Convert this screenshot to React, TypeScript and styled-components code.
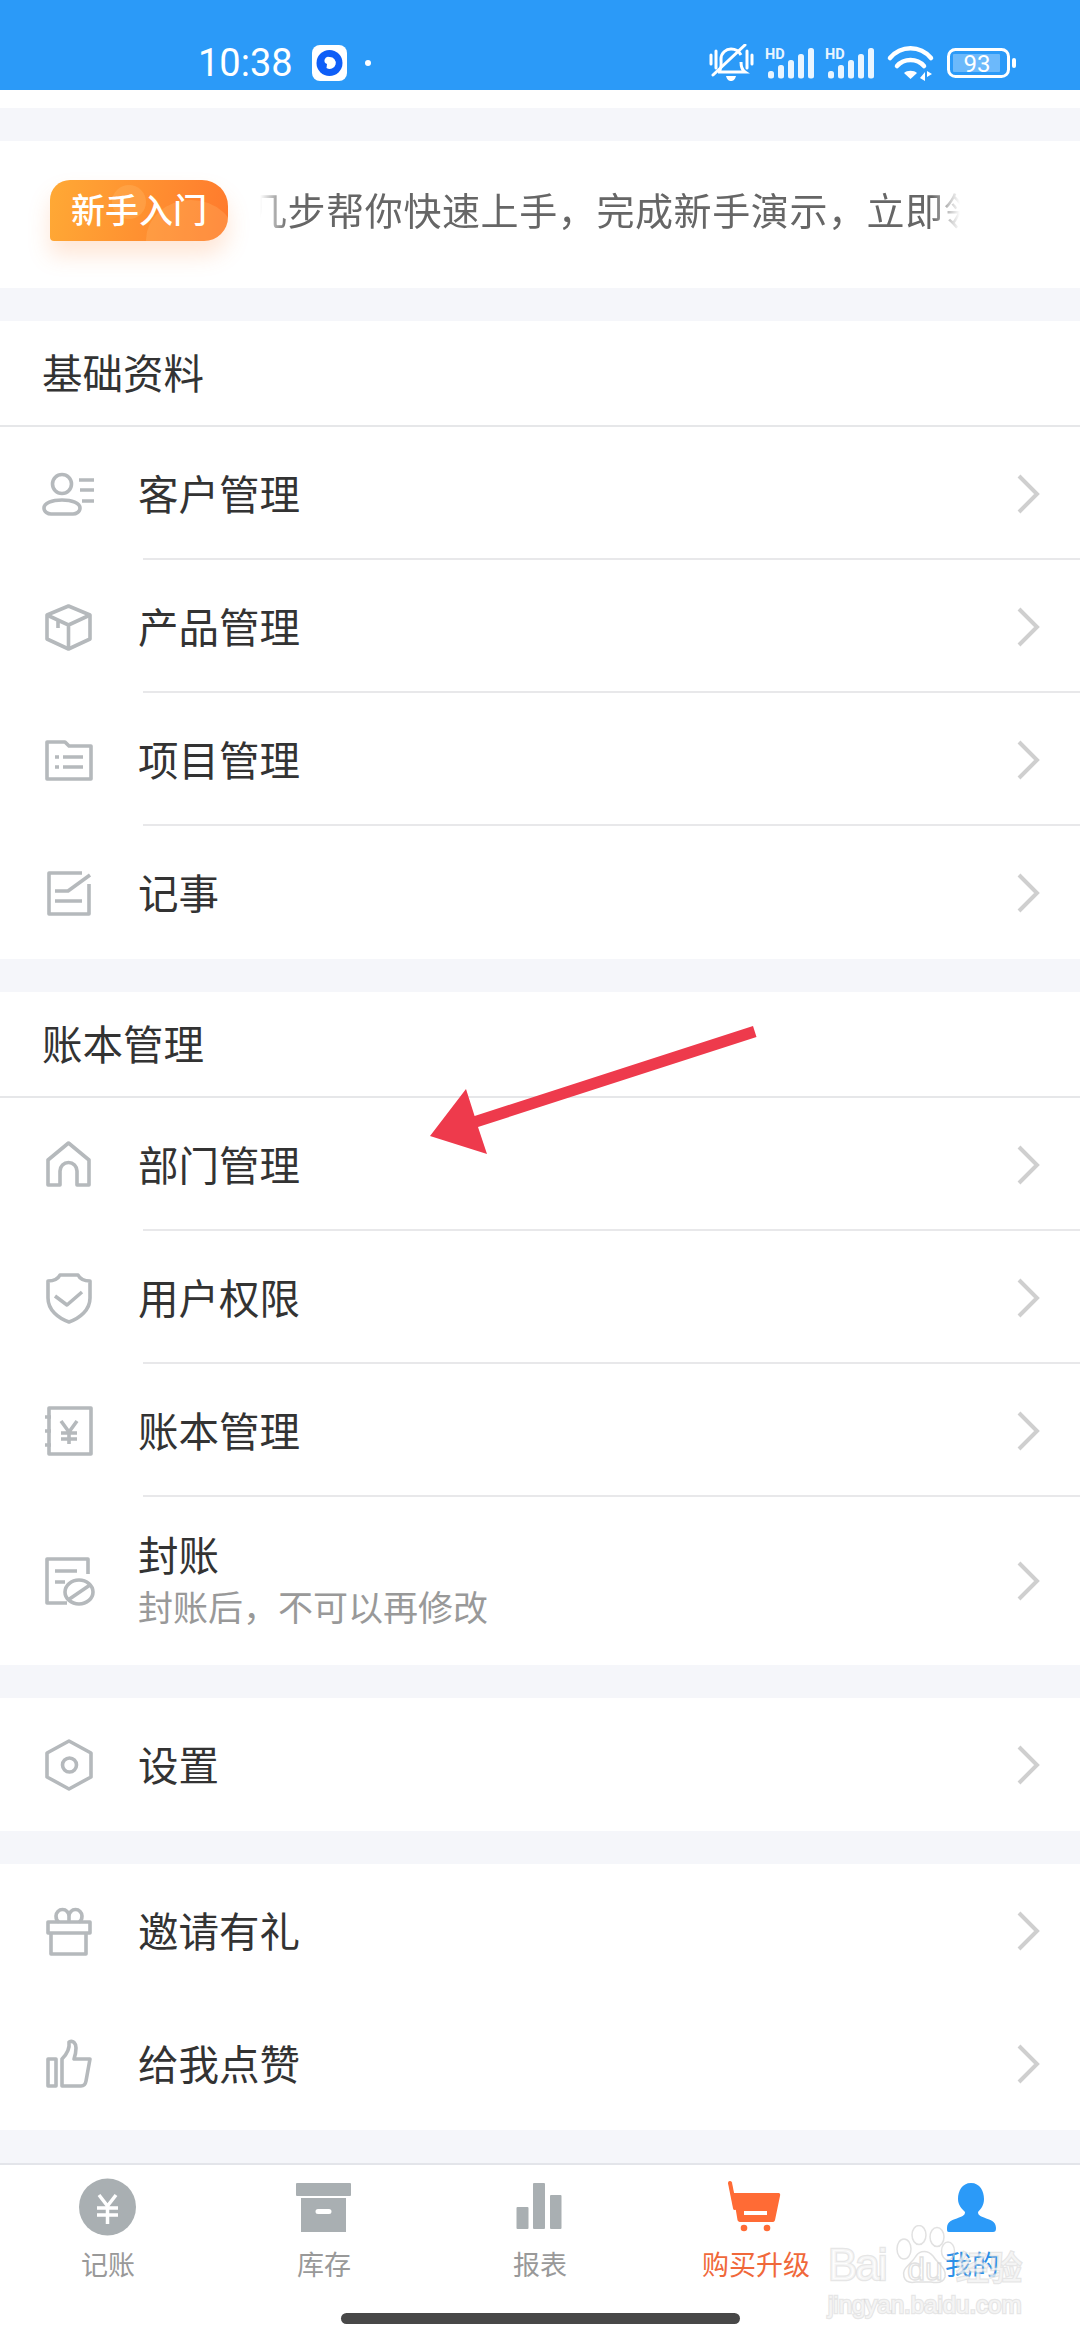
import React from "react";
import styled, { createGlobalStyle } from "styled-components";

const BLUE = "#2b9af8";
const ICON_GRAY = "#b5b9bc";
const TAB_GRAY = "#a9afb2";
const ORANGE = "#ff6b35";

const GlobalStyle = createGlobalStyle`
  html, body {
    margin: 0;
    padding: 0;
    background: #f5f6fa;
  }
  * {
    box-sizing: border-box;
  }
`;

const Page = styled.div`
  position: relative;
  width: 1080px;
  height: 2340px;
  overflow: hidden;
  display: flex;
  flex-direction: column;
  gap: 33px;
  background: #f5f6fa;
  font-family: "Noto Sans CJK SC", "Noto Sans", sans-serif;
  color: #333;
`;

const TopBlock = styled.div`
  height: 108px;
  display: flex;
  flex-direction: column;
  background: #fff;
`;

const StatusBar = styled.div`
  height: 90px;
  padding: 44px 62px 8px 198px;
  display: flex;
  align-items: center;
  justify-content: space-between;
  background: ${BLUE};
  color: #fff;
`;

const StatusLeft = styled.div`
  display: flex;
  align-items: center;
`;

const Clock = styled.span`
  width: 114px;
  font-family: Roboto, sans-serif;
  font-size: 38px;
  line-height: 38px;
`;

const AppBadge = styled.svg`
  width: 35px;
  height: 36px;
`;

const StatusDot = styled.span`
  width: 6px;
  height: 6px;
  margin-left: 18px;
  border-radius: 50%;
  background: #fff;
`;

const StatusRight = styled.div`
  display: flex;
  align-items: center;
  gap: 10px;
`;

const Card = styled.section`
  display: flex;
  flex-direction: column;
  background: #fff;
`;

const Promo = styled.div`
  height: 147px;
  padding: 0 120px 8px 50px;
  display: flex;
  align-items: center;
  gap: 32px;
  background: #fff;
`;

const PromoBadge = styled.div`
  position: relative;
  flex: none;
  width: 178px;
  height: 61px;
  padding-bottom: 3px;
  display: flex;
  align-items: center;
  justify-content: center;
  border-radius: 20px 26px 24px 4px;
  background: linear-gradient(100deg, #ffa935, #ff7a2d);
  box-shadow: 0 14px 22px rgba(255, 140, 70, 0.22);
  color: #fff;
  font-size: 34px;
  font-weight: 500;
  line-height: 56px;
  overflow: hidden;

  &::before,
  &::after {
    content: "";
    position: absolute;
    border-radius: 50%;
    background: rgba(255, 205, 130, 0.22);
  }

  &::before {
    width: 34px;
    height: 34px;
    left: 62px;
    top: 5px;
  }

  &::after {
    width: 90px;
    height: 80px;
    left: 96px;
    top: 20px;
  }
`;

const PromoLabel = styled.span`
  position: relative;
  z-index: 1;
`;

const Marquee = styled.div`
  flex: 1;
  padding-bottom: 4px;
  overflow: hidden;
  white-space: nowrap;
  color: #666;
  font-size: 38px;
  letter-spacing: 0.6px;
  line-height: 56px;
  mask-image: linear-gradient(90deg, transparent 0, #000 28px, #000 672px, transparent 700px);
`;

const MarqueeText = styled.span`
  display: inline-block;
  margin-left: -11px;
`;

const SectionHeader = styled.div`
  height: 106px;
  padding: 0 0 3px 42px;
  display: flex;
  align-items: center;
  border-bottom: 2px solid #e6e7e9;
  font-size: 40.5px;
  line-height: 56px;
`;

const Row = styled.div<{ $tall?: boolean; $divided?: boolean }>`
  position: relative;
  height: ${(p) => (p.$tall ? "168px" : "133px")};
  padding: 0 38px;
  display: flex;
  align-items: center;

  ${(p) =>
    p.$divided &&
    `
    &::after {
      content: "";
      position: absolute;
      left: 143px;
      right: 0;
      bottom: 0;
      height: 2px;
      background: #e8e8ea;
    }
  `}
`;

const RowIcon = styled.svg`
  flex: none;
  width: 60px;
  height: 60px;
  fill: none;
  stroke: ${ICON_GRAY};
  stroke-width: 3.6;
  stroke-linejoin: round;
`;

const RowText = styled.div`
  flex: 1;
  margin-left: 40px;
  padding-bottom: 2px;
  display: flex;
  flex-direction: column;
`;

const RowTitle = styled.div`
  font-size: 40.5px;
  line-height: 52px;
`;

const RowSub = styled.div`
  color: #999;
  font-size: 35px;
  line-height: 52px;
`;

const Chevron = styled.svg`
  flex: none;
  width: 24px;
  height: 40px;
  margin-right: 2px;
  fill: none;
  stroke: #cfcfcf;
  stroke-width: 4;
`;

const TabBar = styled.nav`
  height: 177px;
  display: flex;
  flex-direction: column;
  align-items: center;
  border-top: 2px solid #e3e5ea;
  background: #fff;
`;

const TabRow = styled.div`
  width: 100%;
  padding-top: 13px;
  display: flex;
`;

const Tab = styled.div<{ $color: string }>`
  flex: 1;
  display: flex;
  flex-direction: column;
  align-items: center;
  gap: 8px;
  color: ${(p) => p.$color};
  font-size: 27px;
  line-height: 36px;
`;

const TabIcon = styled.svg`
  width: 60px;
  height: 60px;
`;

const HomeBar = styled.div`
  width: 399px;
  height: 11px;
  margin-top: 31px;
  border-radius: 6px;
  background: #484848;
`;

const Arrow = styled.svg`
  position: absolute;
  left: 420px;
  top: 1016px;
  width: 350px;
  height: 150px;
`;

const Watermark = styled.div`
  position: absolute;
  left: 828px;
  top: 2225px;
  width: 194px;
  display: flex;
  flex-direction: column;
  color: rgba(255, 255, 255, 0.6);
  -webkit-text-stroke: 2.5px rgba(205, 205, 205, 0.5);
  paint-order: stroke fill;
`;

const WatermarkTop = styled.div`
  height: 62px;
  display: flex;
  align-items: flex-end;
`;

const WatermarkBai = styled.span`
  width: 62px;
  font-family: "Liberation Sans", sans-serif;
  font-size: 44px;
  letter-spacing: -2px;
  line-height: 44px;
`;

const WatermarkPaw = styled.svg`
  flex: none;
  width: 66px;
  height: 62px;
  fill: none;
  stroke: rgba(205, 205, 205, 0.6);
  stroke-width: 1.5;
`;

const WatermarkCn = styled.span`
  font-size: 33px;
  line-height: 42px;
`;

const WatermarkUrl = styled.div`
  margin-top: 4px;
  font-family: "Liberation Sans", sans-serif;
  font-size: 24px;
  line-height: 28px;
`;

const MENU_ICONS: Record<string, React.ReactNode> = {
  customer: (
    <>
      <circle cx="24" cy="20" r="9.5" />
      <path d="M6 44c0-5 8-8 18-8s18 3 18 8c0 4-4 6-7 6H13c-3 0-7-2-7-6z" />
      <path d="M41 16h15M42 26h14M44 37h12" />
    </>
  ),
  box: (
    <>
      <path d="M30.5 9 52 18v24l-21.500 10L9 42V18z" />
      <path d="M9 18l21.500 10L52 18M30.500 28v24M20 23v8" />
    </>
  ),
  folder: (
    <>
      <path d="M9 12h18l4 4h22v33H9z" />
      <path d="M17 27h4M25 27h20M17 37h4M25 37h20" />
    </>
  ),
  note: (
    <>
      <path d="M44 10H11v41h40V21" />
      <path d="M52 12 30 28H17M17 38h27" />
    </>
  ),
  home: <path d="M10 50V25L30.500 8 51 25v25H39V36a8.500 8.500 0 0 0-17 0v14z" />,
  shield: (
    <>
      <path d="M22 7h18c2 4 7 6 12 6v17c0 12-10 20-21 24-11-4-21-12-21-24V13c5 0 10-2 12-6z" />
      <path d="m17 28 12 9 15-13" />
    </>
  ),
  ledger: (
    <>
      <path d="M11 7h42v46H11z" />
      <path d="M7 16h6M7 30h6M7 44h6" />
      <path d="m23 20 8 11 8-11M31 31v12M23 32h16M23 38h16" />
    </>
  ),
  seal: (
    <>
      <path d="M50 23V8H9v44h20" />
      <path d="M17 20h22M17 31h10" />
      <ellipse cx="41" cy="41" rx="14" ry="12" />
      <path d="m30 49 22-15" />
    </>
  ),
  gear: (
    <>
      <path d="m31 6 22 12v24L31 54 9 42V18z" />
      <circle cx="31.500" cy="30" r="7" />
    </>
  ),
  gift: (
    <>
      <path d="M10 21h42v11H10zM13 32v21h35V32" />
      <path d="M31 21v-6a6.500 6.500 0 1 0-13 0c0 2 1 5 3 6M31 21v-6a6.500 6.500 0 1 1 13 0c0 2-1 5-3 6" />
    </>
  ),
  thumb: (
    <>
      <path d="M10 25h8v27h-8z" />
      <path d="M24 52V25c5-5 8-10 7-17 4-2 7 1 7 6 0 4-1 8-2 11h16l-4 22c-.5 3-2 5-5 5z" />
    </>
  ),
};

function MenuRow({
  icon,
  title,
  sub,
  divided,
}: {
  icon: string;
  title: string;
  sub?: string;
  divided?: boolean;
}) {
  return (
    <Row $tall={!!sub} $divided={divided}>
      <RowIcon viewBox="0 0 60 60">{MENU_ICONS[icon]}</RowIcon>
      <RowText>
        <RowTitle>{title}</RowTitle>
        {sub && <RowSub>{sub}</RowSub>}
      </RowText>
      <Chevron viewBox="0 0 24 40">
        <path d="M3 2l18 18L3 38" />
      </Chevron>
    </Row>
  );
}

function MuteIcon() {
  return (
    <svg width="46" height="38" viewBox="0 0 46 38" fill="none" stroke="#fff" strokeWidth="3">
      <path d="M2 11v9M7 7v17M38 7v17M43 11v9" strokeLinecap="round" />
      <path d="M10 28c3-4 2-9 2-13 0-6 5-10 10-10 4 0 8 2 10 6M32 18c0 5 1 8 4 10H9" />
      <path d="M36 1 4 31" strokeLinecap="round" />
      <path d="M17 32h10c-1 4-3 5-5 5s-4-1-5-5z" fill="#fff" stroke="none" />
    </svg>
  );
}

function SignalIcon() {
  return (
    <svg width="50" height="32" viewBox="0 0 50 32">
      <text x="0" y="12" fontFamily="Roboto, sans-serif" fontWeight="700" fontSize="14.500" fill="#e9f5ff">
        HD
      </text>
      <g fill="#e9f5ff">
        <rect x="3" y="24" width="6" height="7.500" rx="2.500" />
        <rect x="13" y="18" width="6" height="13.500" rx="2.500" />
        <rect x="23" y="13" width="6" height="18.500" rx="2.500" />
        <rect x="33" y="7" width="6" height="24.500" rx="2.500" />
        <rect x="43" y="1" width="6" height="30.500" rx="2.500" />
      </g>
    </svg>
  );
}

function WifiIcon() {
  return (
    <svg width="52" height="38" viewBox="0 0 52 38" fill="none" stroke="#fff" strokeWidth="4.500">
      <path d="M5 14C16 1 35 1 46 14M12 22c7-8 20-8 27 0" strokeLinecap="round" />
      <path d="m25.500 35-6.500-6c3-3 10-3 13 0z" fill="#fff" stroke="none" />
      <path d="M40 28v9l-5-3zM42 27l5 3-5 3z" fill="#fff" stroke="none" />
    </svg>
  );
}

function BatteryIcon() {
  return (
    <svg width="71" height="30" viewBox="0 0 71 30" fill="none">
      <rect x="1.500" y="1.500" width="60" height="27" rx="7" stroke="#fff" strokeWidth="3" />
      <rect x="6" y="6" width="47" height="18" rx="1" fill="#6cb9fb" />
      <rect x="65" y="10" width="4" height="10" rx="2" fill="#fff" />
      <text x="30" y="23.500" textAnchor="middle" fontFamily="Roboto, sans-serif" fontSize="24" fill="#fff">
        93
      </text>
    </svg>
  );
}

const TABS: { label: string; color: string; icon: React.ReactNode }[] = [
  {
    label: "记账",
    color: "#999",
    icon: (
      <>
        <circle cx="29.500" cy="29" r="28.500" fill={TAB_GRAY} />
        <path d="m21 17 8.500 11L38 17M19 30h21M19 37h21M29.500 28v18" fill="none" stroke="#fff" strokeWidth="3.500" />
      </>
    ),
  },
  {
    label: "库存",
    color: "#999",
    icon: (
      <>
        <rect x="2" y="5" width="55" height="13" rx="1" fill={TAB_GRAY} />
        <path d="M7 20h45v34H7zM24 31a2.500 2.500 0 0 0 0 5h11a2.500 2.500 0 0 0 0-5z" fill={TAB_GRAY} fillRule="evenodd" />
      </>
    ),
  },
  {
    label: "报表",
    color: "#999",
    icon: (
      <g fill={TAB_GRAY}>
        <rect x="6.500" y="29" width="12" height="22" rx="1" />
        <rect x="23" y="5" width="12" height="46" rx="1" />
        <rect x="40" y="17" width="11.500" height="34" rx="1" />
      </g>
    ),
  },
  {
    label: "购买升级",
    color: "#f0683a",
    icon: (
      <>
        <path d="M4 5l5 25" fill="none" stroke={ORANGE} strokeWidth="4" strokeLinecap="round" />
        <path
          d="M7 15h45c2 0 2.500 1 2 3l-5 24c-.5 1.500-1 2-3 2H15c-2 0-3-.5-3.500-2z"
          fill={ORANGE}
        />
        <rect x="18" y="33" width="23" height="4" fill="#fff" />
        <circle cx="18" cy="50" r="3.300" fill={ORANGE} />
        <circle cx="41" cy="50" r="3.300" fill={ORANGE} />
      </>
    ),
  },
  {
    label: "我的",
    color: "#2b8fe8",
    icon: (
      <path
        d="M29 5c9 0 13 8 13 16 0 6-3 10-6 13 0 3 2 4 6 5.500 6 2.500 12 3.500 12 10.500 0 3-1 4-3 4H7c-2 0-2-1-2-4 0-7 6-8 12-10.500 4-1.500 6-2.500 6-5.500-3-3-7-7-7-13 0-8 4-16 13-16z"
        fill={BLUE}
      />
    ),
  },
];

export default function App() {
  return (
    <Page>
      <GlobalStyle />
      <TopBlock>
        <StatusBar>
          <StatusLeft>
            <Clock>10:38</Clock>
            <AppBadge viewBox="0 0 35 36">
              <rect width="35" height="36" rx="8" fill="#fff" />
              <circle cx="17.500" cy="18" r="13" fill="#0f5ef7" />
              <path d="M17.500 12a6 6 0 1 1-3 11l.5-4a3 3 0 0 1 2.500-7z" fill="#fff" />
            </AppBadge>
            <StatusDot />
          </StatusLeft>
          <StatusRight>
            <MuteIcon />
            <SignalIcon />
            <SignalIcon />
            <WifiIcon />
            <BatteryIcon />
          </StatusRight>
        </StatusBar>
      </TopBlock>

      <Promo>
        <PromoBadge>
          <PromoLabel>新手入门</PromoLabel>
        </PromoBadge>
        <Marquee>
          <MarqueeText>几步帮你快速上手，完成新手演示，立即领取</MarqueeText>
        </Marquee>
      </Promo>

      <Card>
        <SectionHeader>基础资料</SectionHeader>
        <MenuRow icon="customer" title="客户管理" divided />
        <MenuRow icon="box" title="产品管理" divided />
        <MenuRow icon="folder" title="项目管理" divided />
        <MenuRow icon="note" title="记事" />
      </Card>

      <Card>
        <SectionHeader>账本管理</SectionHeader>
        <MenuRow icon="home" title="部门管理" divided />
        <MenuRow icon="shield" title="用户权限" divided />
        <MenuRow icon="ledger" title="账本管理" divided />
        <MenuRow icon="seal" title="封账" sub="封账后，不可以再修改" />
      </Card>

      <Card>
        <MenuRow icon="gear" title="设置" />
      </Card>

      <Card>
        <MenuRow icon="gift" title="邀请有礼" />
        <MenuRow icon="thumb" title="给我点赞" />
      </Card>

      <TabBar>
        <TabRow>
          {TABS.map((tab) => (
            <Tab key={tab.label} $color={tab.color}>
              <TabIcon viewBox="0 0 60 60">{tab.icon}</TabIcon>
              {tab.label}
            </Tab>
          ))}
        </TabRow>
        <HomeBar />
      </TabBar>

      <Arrow viewBox="0 0 350 150">
        <polygon points="333,10 336.500,21 58,111 67,138 10,120 46,73 54.600,100" fill="#ee3a4c" />
      </Arrow>

      <Watermark>
        <WatermarkTop>
          <WatermarkBai>Bai</WatermarkBai>
          <WatermarkPaw viewBox="0 0 66 62">
            <ellipse cx="14" cy="24" rx="7" ry="10" />
            <ellipse cx="29" cy="10" rx="7" ry="9.500" />
            <ellipse cx="47" cy="12" rx="7" ry="9.500" />
            <ellipse cx="58" cy="26" rx="6.500" ry="9" />
            <path d="M14 52c-3-9 7-12 12-21 4-6 12-6 17 0 5 8 14 12 12 21-2 7-9 6-14 5H26c-5 1-10 1-12-5z" />
            <text x="35" y="55" textAnchor="middle" fontFamily="Liberation Sans, sans-serif" fontSize="32" fill="none">
              du
            </text>
          </WatermarkPaw>
          <WatermarkCn>经验</WatermarkCn>
        </WatermarkTop>
        <WatermarkUrl>jingyan.baidu.com</WatermarkUrl>
      </Watermark>
    </Page>
  );
}
